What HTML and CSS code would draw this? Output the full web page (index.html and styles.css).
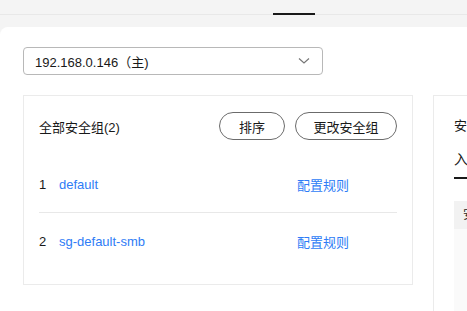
FILE: index.html
```html
<!DOCTYPE html>
<html lang="zh-CN">
<head>
    <meta charset="UTF-8" />
    <title>安全组</title>
    <link rel="stylesheet" href="styles.css">
</head>
<body>

    <div class="topbar">
        <span class="tab-active"></span>
    </div>

    <div class="panel">
        <div class="select">
            <span>192.168.0.146（主)</span>
            <svg class="chevron" width="12" height="8" viewBox="0 0 12 8">
                <path d="M1 1.5 L6 6 L11 1.5" fill="none" stroke="#777" stroke-width="1.2" />
            </svg>
        </div>

        <div class="cards">
            <div class="card card-left">
                <div class="card-head">
                    <span class="title">全部安全组(2)</span>
                    <div class="actions">
                        <button class="btn btn-sort">排序</button>
                        <button class="btn btn-change">更改安全组</button>
                    </div>
                </div>

                <ul class="groups">
                    <li>
                        <span class="num">1</span>
                        <a class="name">default</a>
                        <a class="rule">配置规则</a>
                    </li>
                    <li>
                        <span class="num">2</span>
                        <a class="name">sg-default-smb</a>
                        <a class="rule">配置规则</a>
                    </li>
                </ul>
            </div>

            <div class="card card-right">
                <div class="right-title">安全组规则</div>
                <div class="right-tab">入方向规则</div>
                <div class="table">
                    <div class="table-head">安全组</div>
                    <div class="table-body"></div>
                </div>
            </div>
        </div>
    </div>

</body>
</html>
```

FILE: styles.css
```css
html,
body {
    height: 100%;
}

body {
    margin: 0;
    background-color: #f4f4f4;
    font-family: "Liberation Sans", "Noto Sans CJK SC", sans-serif;
    font-size: 13px;
    color: #191919;
    overflow: hidden;
    display: flex;
    flex-direction: column;
}

.topbar {
    flex-shrink: 0;
    height: 14px;
    border-bottom: 1px solid #e8e8e8;
    position: relative;
}

.tab-active {
    position: absolute;
    left: 273px;
    bottom: -1px;
    width: 42px;
    height: 2px;
    background-color: #191919;
}

.panel {
    flex: 1;
    min-height: 0;
    overflow: hidden;
    margin-top: 12px;
    background-color: white;
    border-top-left-radius: 8px;
    padding: 20px 0 0 23px;
    display: flex;
    flex-direction: column;
}

.select {
    flex-shrink: 0;
    box-sizing: border-box;
    width: 300px;
    height: 28px;
    border: 1px solid #b8b8b8;
    border-radius: 4px;
    display: flex;
    align-items: center;
    justify-content: space-between;
    padding: 0 12px 0 11px;
}

.chevron {
    display: block;
}

.cards {
    flex: 1;
    min-height: 0;
    display: flex;
    gap: 20px;
    margin-top: 20px;
    align-items: flex-start;
    overflow: hidden;
}

.card {
    box-sizing: border-box;
    border: 1px solid #ebebeb;
    flex-shrink: 0;
}

.card-left {
    width: 390px;
    padding: 16px 15px 15px 15px;
}

.card-head {
    display: flex;
    justify-content: space-between;
    align-items: center;
}

.actions {
    display: flex;
    gap: 10px;
}

.btn {
    height: 28px;
    border: 1px solid #6b6b6b;
    border-radius: 14px;
    background: white;
    font-family: inherit;
    font-size: 13px;
    color: #191919;
    padding: 0;
}

.btn-sort {
    width: 66px;
}

.btn-change {
    width: 102px;
}

.groups {
    list-style: none;
    margin: 16px 0 0 0;
    padding: 0;
}

.groups li {
    height: 56px;
    display: flex;
    align-items: center;
}

.groups li + li {
    border-top: 1px solid #e8e8e8;
}

.num {
    width: 20px;
}

.name {
    width: 238px;
    color: #2e7cf6;
}

.rule {
    color: #2e7cf6;
}

.card-right {
    width: 300px;
    height: 100%;
    padding: 20px 0 0 20px;
    border-bottom: none;
    overflow: hidden;
}

.right-title {
    line-height: 20px;
}

.right-tab {
    margin-top: 13px;
    display: inline-block;
    font-size: 14px;
    line-height: 20px;
    padding-bottom: 8px;
    border-bottom: 2px solid #191919;
}

.table {
    margin-top: 22px;
}

.table-head {
    height: 28px;
    line-height: 28px;
    background-color: #f2f2f2;
    padding-left: 9px;
    font-size: 12px;
}

.table-body {
    height: 200px;
    background-color: #fafafa;
}
```
